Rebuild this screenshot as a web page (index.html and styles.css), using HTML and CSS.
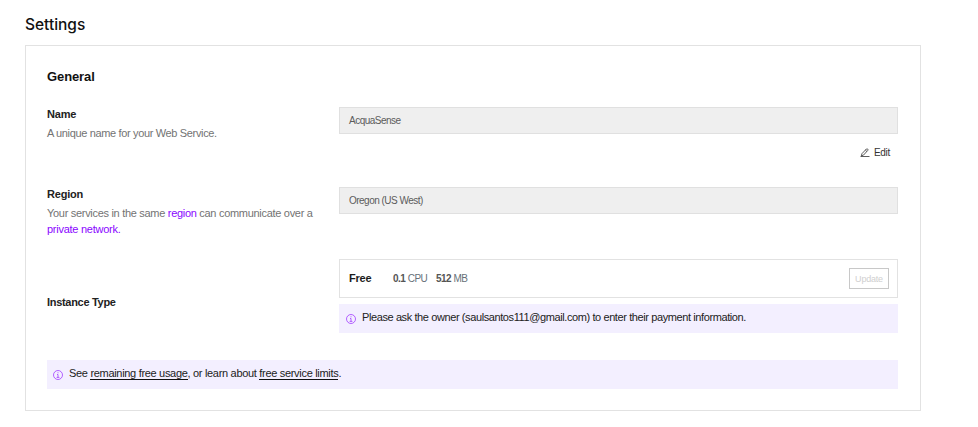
FILE: index.html
```html
<!DOCTYPE html>
<html lang="en">
<head>
<meta charset="utf-8">
<title>Settings</title>
<link rel="stylesheet" href="styles.css">
</head>
<body>
<main class="page">
  <h1 class="page-title">Settings</h1>
  <section class="card">
    <h2 class="card-title">General</h2>
    <div class="row row-name">
      <div class="info">
        <h3 class="label">Name</h3>
        <p class="help">A unique name for your Web Service.</p>
      </div>
      <div class="control">
        <div class="field">AcquaSense</div>
        <button class="edit">
          <svg class="pencil" viewBox="0 0 10 10" fill="none" stroke="currentColor" stroke-width="0.8"><path d="M.5 8.5h9M1.3 7.9 2 5.6 6.4 1a1 1 0 0 1 1.4 1.4L3.5 7.1zM5.4 2l1.4 1.4"/></svg>
          <span>Edit</span>
        </button>
      </div>
    </div>
    <div class="row row-region">
      <div class="info">
        <h3 class="label">Region</h3>
        <p class="help help-region">Your services in the same <a class="link">region</a> can communicate over a<br><span class="tail"><a class="link">private network.</a></span></p>
      </div>
      <div class="control">
        <div class="field">Oregon (US West)</div>
      </div>
    </div>
    <div class="row row-instance">
      <div class="info"><h3 class="label label-instance">Instance Type</h3></div>
      <div class="control">
        <div class="plan">
          <strong class="plan-name">Free</strong>
          <span class="spec spec-cpu"><b>0.1</b> CPU</span>
          <span class="spec"><b>512</b> MB</span>
          <button class="update" disabled>Update</button>
        </div>
        <div class="notice notice-owner">
          <svg class="info-icon" viewBox="0 0 10 10" fill="none" stroke="currentColor" stroke-width="0.8"><circle cx="5" cy="5" r="4.5"/><path d="M4 4.5h1v2.8M3.6 7.4h2.8M5 2.3v1"/></svg>
          <span>Please ask the owner (saulsantos111@gmail.com) to enter their payment information.</span>
        </div>
      </div>
    </div>
    <div class="notice notice-wide">
      <svg class="info-icon" viewBox="0 0 10 10" fill="none" stroke="currentColor" stroke-width="0.8"><circle cx="5" cy="5" r="4.5"/><path d="M4 4.5h1v2.8M3.6 7.4h2.8M5 2.3v1"/></svg>
      <span>See <a class="under">remaining free usage</a>, or learn about <a class="under">free service limits</a>.</span>
    </div>
  </section>
</main>
</body>
</html>
```

FILE: styles.css
```css
* { box-sizing: border-box; }
body { margin: 0; background: #fff; color: #1c1c1c; font: 11px/16px "Liberation Sans", Arial, sans-serif; }
h1, h2, h3, p { margin: 0; }
button { font: inherit; background: none; border: 0; padding: 0; }
.page { width: 921px; padding: 13px 0 0 25px; }
.page-title { height: 32px; font: 500 15.5px/23px Inter, sans-serif; letter-spacing: -0.02px; color: #111; }
.card { height: 366px; border: 1px solid #e2e2e2; padding: 21px 22px 0 21px; }
.card-title { height: 40px; font-size: 13px; line-height: 19px; letter-spacing: -0.1px; color: #111; }
.row { display: grid; grid-template-columns: 292px 1fr; }
.row-name { height: 80px; }
.row-region { height: 72px; }
.label { font-size: 11px; line-height: 14px; margin-bottom: 4px; letter-spacing: -0.2px; color: #222; }
.label-instance { letter-spacing: -0.3px; }
.help { color: #737373; letter-spacing: -0.35px; white-space: nowrap; }
.help-region { letter-spacing: -0.3px; }
.tail { letter-spacing: -0.26px; }
.link { color: #8a05ff; }
.field { height: 27px; display: flex; align-items: center; padding-left: 9px; background: #efefef; border: 1px solid #e0e0e0; color: #5c5c5c; font-size: 10px; line-height: 14px; letter-spacing: -0.52px; }
.edit { display: flex; align-items: center; gap: 4px; margin: 11px 8px 0 auto; height: 16px; color: #333; font-size: 10px; letter-spacing: -0.3px; }
.pencil { width: 10px; height: 10px; }
.row-instance { height: 101px; align-items: start; }
.row-instance .info { padding-top: 36px; }
.plan { height: 39px; display: flex; align-items: center; border: 1px solid #e2e2e2; padding: 0 8px 0 9px; }
.plan-name { width: 44px; letter-spacing: -0.2px; padding-bottom: 2px; }
.spec { font-size: 10px; color: #667078; letter-spacing: -0.5px; }
.spec b { color: #555; }
.spec-cpu { width: 43px; }
.update { margin-left: auto; width: 40px; height: 21px; border: 1px solid #c8c8c8; color: #cfcfcf; font-size: 9px; letter-spacing: -0.2px; }
.notice { height: 29px; margin-top: 6px; padding: 0 7px 3px; display: flex; align-items: center; gap: 6px; background: #f3efff; color: #222; white-space: nowrap; letter-spacing: -0.31px; }
.notice-owner { letter-spacing: -0.4px; }
.notice-wide { margin: 0; padding-left: 6px; }
.info-icon { width: 10px; height: 10px; margin-top: 3px; color: #a23cff; flex: none; }
.under { border-bottom: 1px solid #111; }
```
